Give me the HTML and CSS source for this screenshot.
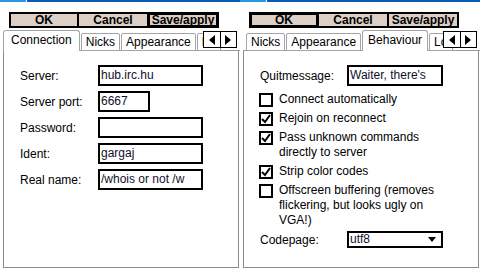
FILE: index.html
```html
<!DOCTYPE html>
<html lang="en">
<head>
    <meta charset="UTF-8">
    <title>Settings</title>
    <link rel="stylesheet" href="styles.css">
</head>
<body>
    <div class="screen">
        <div class="strip"><span class="strip-a"></span><span class="strip-b"></span></div>
        <div class="buttons">
            <span class="btn btn-ok">OK</span>
            <span class="btn btn-cancel">Cancel</span>
            <span class="btn btn-save focus">Save/apply</span>
        </div>
        <div class="tabs">
            <span class="tab active">Connection</span>
            <span class="tab">Nicks</span>
            <span class="tab">Appearance</span>
            <span class="tab part">B</span>
            <div class="scroll">
                <span class="arr"><svg width="6" height="10" viewBox="0 0 6 10"><polygon points="6,0 6,10 0,5" fill="#000"/></svg></span>
                <span class="arr"><svg width="6" height="10" viewBox="0 0 6 10"><polygon points="0,0 0,10 6,5" fill="#000"/></svg></span>
            </div>
        </div>
        <div class="page page-conn">
            <div class="field"><span class="label">Server:</span><span class="input">hub.irc.hu</span></div>
            <div class="field"><span class="label">Server port:</span><span class="input short">6667</span></div>
            <div class="field"><span class="label">Password:</span><span class="input"></span></div>
            <div class="field"><span class="label">Ident:</span><span class="input">gargaj</span></div>
            <div class="field"><span class="label">Real name:</span><span class="input">/whois or not /w</span></div>
        </div>
    </div>

    <div class="screen">
        <div class="strip"><span class="strip-a"></span><span class="strip-b"></span></div>
        <div class="buttons">
            <span class="btn btn-ok focus">OK</span>
            <span class="btn btn-cancel">Cancel</span>
            <span class="btn btn-save">Save/apply</span>
        </div>
        <div class="tabs tabs-shift">
            <span class="tab">Nicks</span>
            <span class="tab">Appearance</span>
            <span class="tab active">Behaviour</span>
            <span class="tab part">Lo</span>
            <div class="scroll">
                <span class="arr"><svg width="6" height="10" viewBox="0 0 6 10"><polygon points="6,0 6,10 0,5" fill="#000"/></svg></span>
                <span class="arr"><svg width="6" height="10" viewBox="0 0 6 10"><polygon points="0,0 0,10 6,5" fill="#000"/></svg></span>
            </div>
        </div>
        <div class="page page-behav">
            <div class="field"><span class="label">Quitmessage:</span><span class="input">Waiter, there's</span></div>
            <ul class="checks">
                <li><span class="box"></span><span class="text">Connect automatically</span></li>
                <li><span class="box"><svg width="10" height="10" viewBox="0 0 10 10"><path d="M1 5 L4 8 L9 1" fill="none" stroke="#000" stroke-width="2"/></svg></span><span class="text">Rejoin on reconnect</span></li>
                <li><span class="box"><svg width="10" height="10" viewBox="0 0 10 10"><path d="M1 5 L4 8 L9 1" fill="none" stroke="#000" stroke-width="2"/></svg></span><span class="text">Pass unknown commands directly to server</span></li>
                <li><span class="box"><svg width="10" height="10" viewBox="0 0 10 10"><path d="M1 5 L4 8 L9 1" fill="none" stroke="#000" stroke-width="2"/></svg></span><span class="text">Strip color codes</span></li>
                <li><span class="box"></span><span class="text">Offscreen buffering (removes flickering, but looks ugly on VGA!)</span></li>
            </ul>
            <div class="field field-select"><span class="label">Codepage:</span><span class="input select">utf8<svg width="8" height="5" viewBox="0 0 8 5"><polygon points="0,0 8,0 4,5" fill="#000"/></svg></span></div>
        </div>
    </div>
</body>
</html>
```

FILE: styles.css
```css
* {
    margin: 0;
    padding: 0;
    list-style: none;
    box-sizing: border-box;
}
body {
    display: flex;
    width: 480px;
    height: 270px;
    background: #fff;
    font-family: "Liberation Sans", Arial, sans-serif;
    font-size: 12px;
    color: #000;
}
.screen {
    width: 240px;
    height: 270px;
    display: flex;
    flex-direction: column;
}

/* title strip */
.strip {
    display: flex;
    height: 2px;
}
.strip-a {
    width: 26px;
    background: #2b96e6;
    margin-right: 1px;
}
.strip-b {
    flex: 1;
    background: #0c5ab6;
}

/* OK / Cancel / Save */
.buttons {
    display: flex;
    margin: 10px 0 0 9px;
}
.btn {
    height: 16px;
    border: 2px solid #000;
    background: #dccfc6;
    font-weight: bold;
    font-size: 12px;
    line-height: 12px;
    text-align: center;
}
.btn + .btn {
    margin-left: -2px;
}
.btn.focus {
    border-width: 3px;
    line-height: 10px;
}
.btn-ok { width: 70px; }
.btn-cancel { width: 72px; }
.btn-save { width: 72px; }

/* tab strip */
.tabs {
    position: relative;
    display: flex;
    align-items: flex-end;
    height: 21px;
    margin: 2px 0 0 3px;
    width: 237px;
    overflow: hidden;
    box-shadow: inset 0 -1px #999;
}
.tabs-shift {
    padding-left: 3px;
}
.tab {
    flex: none;
    height: 18px;
    padding: 0 4px;
    margin-right: 1px;
    border: 1px solid #a4a4a4;
    border-radius: 2px 2px 0 0;
    background: #fff;
    line-height: 16px;
    white-space: nowrap;
}
.tab.active {
    height: 21px;
    padding: 0 7px;
    border-bottom: none;
    border-radius: 3px 3px 0 0;
    line-height: 18px;
}
.tabs-shift .tab.active {
    padding: 0 5px;
}
.tab.part {
    width: 24px;
    overflow: hidden;
}
.scroll {
    position: absolute;
    right: 3px;
    top: 1px;
    display: flex;
    width: 34px;
    height: 17px;
    border: 1px solid #000;
    background: #fff;
}
.arr {
    flex: 1;
    display: flex;
    align-items: center;
    justify-content: center;
}
.arr + .arr {
    border-left: 1px solid #000;
}

/* page body */
.page {
    margin-left: 3px;
    width: 236px;
    height: 217px;
    border: 1px solid #8c8c8c;
    border-top: none;
    padding: 14px 0 0 16px;
    display: flex;
    flex-direction: column;
}
.page-conn {
    gap: 5px;
}
.field {
    display: flex;
    align-items: center;
    height: 21px;
}
.label {
    width: 78px;
    flex: none;
}
.page-behav .label {
    width: 87px;
}
.input {
    width: 105px;
    height: 21px;
    border: 2px solid #000;
    padding-left: 1px;
    line-height: 17px;
    white-space: nowrap;
    overflow: hidden;
    color: #10102a;
}
.input.short {
    width: 52px;
}
.page-behav .input {
    width: 96px;
}

/* checkboxes */
.checks {
    margin-top: 6px;
    display: flex;
    flex-direction: column;
    gap: 4px;
}
.checks li {
    display: flex;
    align-items: flex-start;
    line-height: 15px;
}
.box {
    flex: none;
    width: 14px;
    height: 14px;
    border: 2px solid #000;
    margin: 1px 6px 0 -1px;
    display: flex;
    align-items: center;
    justify-content: center;
}
.text {
    width: 168px;
}

/* codepage dropdown */
.field-select {
    margin-top: 3px;
    height: 17px;
}
.input.select {
    height: 17px;
    line-height: 13px;
    display: flex;
    align-items: center;
    justify-content: space-between;
    padding-right: 5px;
}
```
